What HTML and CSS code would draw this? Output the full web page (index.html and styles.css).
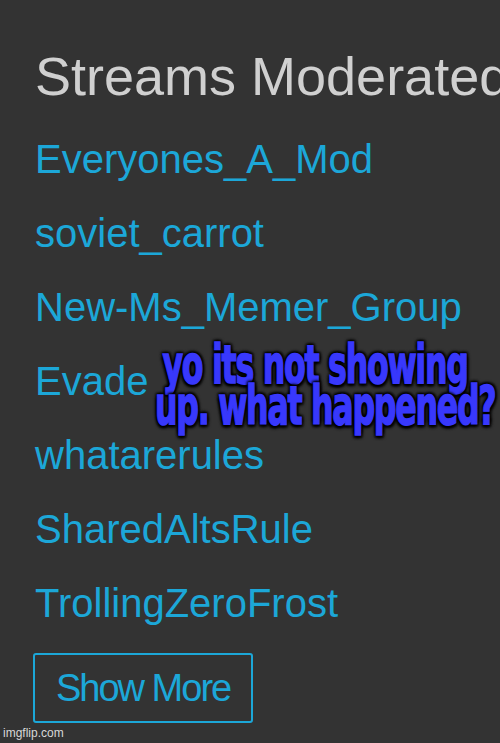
FILE: index.html
```html
<!DOCTYPE html>
<html lang="en">
<head>
    <meta charset="UTF-8">
    <meta name="viewport" content="width=device-width, initial-scale=1.0">
    <title>Streams Moderated</title>
    <link rel="stylesheet" href="styles.css">
</head>
<body>

<div class="panel">
    <h2>Streams Moderated</h2>

    <ul class="streams">
        <li><a href="#">Everyones_A_Mod</a></li>
        <li><a href="#">soviet_carrot</a></li>
        <li><a href="#">New-Ms_Memer_Group</a></li>
        <li><a href="#">Evade</a></li>
        <li><a href="#">whatarerules</a></li>
        <li><a href="#">SharedAltsRule</a></li>
        <li><a href="#">TrollingZeroFrost</a></li>
    </ul>

    <button class="show-more">Show More</button>
</div>

<div class="caption">yo its not showing<br>up. what happened?</div>

<div class="watermark">imgflip.com</div>

</body>
</html>
```

FILE: styles.css
```css
body {
    margin: 0;
    background-color: #333333;
    font-family: 'Liberation Sans', Arial, sans-serif;
    height: 743px;
    overflow: hidden;
    position: relative;
}

.panel {
    padding: 44px 0 0 35px;
    white-space: nowrap;
}

.panel h2 {
    margin: 0 0 14px;
    font-size: 54px;
    line-height: 64px;
    font-weight: normal;
    color: #d0d0d0;
}

.streams {
    list-style: none;
    margin: 0;
    padding: 0;
}

.streams li {
    font-size: 40px;
    line-height: 74px;
}

.streams a {
    color: #1ca7d8;
    text-decoration: none;
}

.show-more {
    display: block;
    margin: 13px 0 0 -2px;
    height: 70px;
    padding: 0 21px;
    background: none;
    border: 2px solid #1ca7d8;
    border-radius: 3px;
    color: #1ca7d8;
    font-family: 'Liberation Sans', Arial, sans-serif;
    font-size: 38px;
    line-height: 66px;
    letter-spacing: -2px;
}

/* meme caption over the list */
.caption {
    position: absolute;
    left: 115px;
    top: 345px;
    width: 400px;
    text-align: center;
    white-space: nowrap;
    font-family: 'DejaVu Sans', sans-serif;
    font-stretch: condensed;
    font-weight: bold;
    font-size: 44px;
    line-height: 34px;
    letter-spacing: -1.6px;
    color: #3838fc;
    -webkit-text-stroke: 1.2px #3838fc;
    transform: scaleX(0.8) scaleY(1.2);
    transform-origin: 50% 0;
    text-shadow: 0 0 3px #000, 0 0 3px #000, 2px 2px 3px #000, -2px -2px 3px #000, 2px -2px 3px #000, -2px 2px 3px #000;
}

.watermark {
    position: absolute;
    left: 3px;
    bottom: 3px;
    font-size: 12px;
    color: #d8d8d8;
}
```
